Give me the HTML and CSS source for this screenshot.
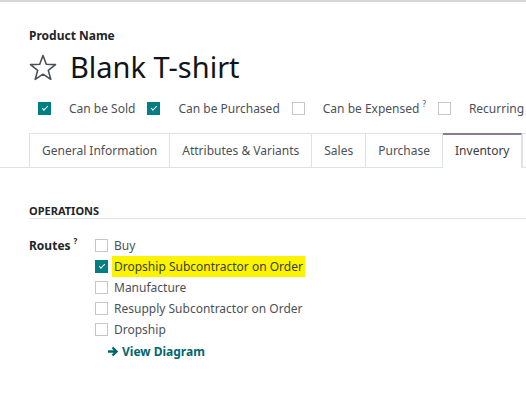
FILE: index.html
```html
<!DOCTYPE html>
<html lang="en">
<head>
    <meta charset="UTF-8">
    <title>Blank T-shirt</title>
    <link rel="stylesheet" href="styles.css">
</head>
<body>
    <div class="sheet">
        <div class="title-block">
            <div class="field-label">Product Name</div>
            <h1 class="product-name">
                <svg class="star" width="28" height="27" viewBox="0 0 28 27">
                    <path d="M14 1.5 L17.3 10.2 L26.5 10.6 L19.3 16.4 L21.8 25.3 L14 20.2 L6.2 25.3 L8.7 16.4 L1.5 10.6 L10.7 10.2 Z" fill="none" stroke="#4a5058" stroke-width="1.6" stroke-linejoin="round"/>
                </svg>
                <span>Blank T-shirt</span>
            </h1>
        </div>

        <div class="options">
            <span class="check on"></span><span class="opt-label">Can be Sold</span>
            <span class="check on"></span><span class="opt-label">Can be Purchased</span>
            <span class="check"></span><span class="opt-label">Can be Expensed<sup>?</sup></span>
            <span class="check"></span><span class="opt-label">Recurring</span>
        </div>
    </div>

    <div class="tabs">
        <div class="tab-spacer"></div>
        <div class="tab">General Information</div>
        <div class="tab">Attributes &amp; Variants</div>
        <div class="tab">Sales</div>
        <div class="tab">Purchase</div>
        <div class="tab active">Inventory</div>
        <div class="tab tab-more"></div>
    </div>

    <div class="sheet">
        <div class="group-title">OPERATIONS</div>
        <div class="routes">
            <div class="routes-label">Routes<sup>?</sup></div>
            <ul class="route-list">
                <li><span class="check"></span>Buy</li>
                <li><span class="check on"></span><span class="marked">Dropship Subcontractor on Order</span></li>
                <li><span class="check"></span>Manufacture</li>
                <li><span class="check"></span>Resupply Subcontractor on Order</li>
                <li><span class="check"></span>Dropship</li>
                <li class="diagram">
                    <svg width="12" height="11" viewBox="0 0 12 11"><path d="M1 5.5 H9 M5.5 1.5 L9.5 5.5 L5.5 9.5" fill="none" stroke="#01666b" stroke-width="2.4"/></svg>
                    View Diagram
                </li>
            </ul>
        </div>
    </div>
</body>
</html>
```

FILE: styles.css
```css
body {
    font-family: 'Noto Sans', 'Open Sans', sans-serif;
    font-size: 12px;
    color: #4b5157;
    background-color: #ffffff;
    margin: 0;
    padding: 0;
    border-top: 2px solid #d6d8dc;
    width: 526px;
    height: 396px;
    overflow: hidden;
}
.sheet {
    padding-left: 29px;
}
.title-block {
    padding-top: 25px;
}
.field-label {
    font-weight: bold;
    color: #222629;
    font-size: 12px;
    line-height: 18px;
}
.product-name {
    margin: 5px 0 0;
    display: flex;
    align-items: center;
    gap: 13px;
    font-weight: normal;
    font-size: 29px;
    line-height: 34px;
    color: #111418;
}
.star {
    flex: none;
}
.options {
    display: flex;
    align-items: center;
    margin-top: 14px;
    padding-left: 9px;
    height: 20px;
    white-space: nowrap;
}
.check {
    display: inline-block;
    box-sizing: border-box;
    width: 13px;
    height: 13px;
    border: 1px solid #c3c7cb;
    background-color: #ffffff;
    flex: none;
}
.check.on {
    background-color: #017e84;
    border-color: #017e84;
    position: relative;
}
.check.on::after {
    content: '';
    position: absolute;
    left: 3px;
    top: 3px;
    width: 5px;
    height: 2px;
    border-left: 1.5px solid #ffffff;
    border-bottom: 1.5px solid #ffffff;
    transform: rotate(-45deg);
}
.opt-label {
    margin-left: 18px;
    margin-right: 12px;
}
sup {
    font-size: 8px;
    margin-left: 3px;
    vertical-align: 6px;
    line-height: 0;
}
.tabs {
    display: flex;
    margin-top: 15px;
    height: 35px;
    white-space: nowrap;
}
.tab-spacer {
    width: 29px;
    flex: none;
    border-bottom: 1px solid #dee2e6;
}
.tab {
    box-sizing: border-box;
    padding: 0 12px;
    line-height: 33px;
    border: 1px solid #dee2e6;
    border-left: none;
    color: #4b5157;
    flex: none;
}
.tab:nth-child(2) {
    border-left: 1px solid #dee2e6;
}
.tab.active {
    border-top: 2px solid #8a7b93;
    border-bottom-color: #ffffff;
    line-height: 32px;
    color: #383d42;
}
.tab-more {
    flex: 1;
    border-left: 1px solid #dee2e6;
    border-right: none;
}
.group-title {
    margin-top: 35px;
    font-size: 11px;
    font-weight: bold;
    color: #222629;
    line-height: 15px;
    padding-bottom: 0;
    border-bottom: 1px solid #dee2e6;
}
.routes {
    display: flex;
    margin-top: 16px;
}
.routes-label {
    width: 66px;
    flex: none;
    font-weight: bold;
    color: #222629;
    line-height: 21px;
}
.route-list {
    list-style: none;
    margin: 0;
    padding: 0;
}
.route-list li {
    display: flex;
    align-items: center;
    line-height: 21px;
    height: 21px;
}
.route-list .check {
    margin-right: 6px;
}
.marked {
    background-color: #fbf300;
    padding: 0 2px;
    margin-left: -2px;
    line-height: 21px;
    color: #3a3f28;
}
.diagram {
    padding-left: 12px;
    margin-top: 1px;
    gap: 3px;
    font-weight: bold;
    color: #01666b;
}
```
